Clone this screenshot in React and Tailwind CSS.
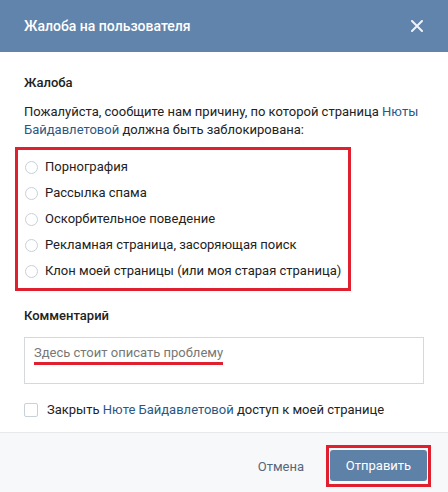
export default function App() {
  const options = [
    "Порнография",
    "Рассылка спама",
    "Оскорбительное поведение",
    "Рекламная страница, засоряющая поиск",
    "Клон моей страницы (или моя старая страница)",
  ];
  return (
    <div
      className="w-[448px] h-[492px] bg-white flex flex-col text-[13px] text-black overflow-hidden"
      style={{ fontFamily: "Roboto, 'Open Sans', sans-serif" }}
    >
      <div className="h-[52px] shrink-0 bg-[#6084ab] flex items-center justify-between pl-6 pr-[24px]">
        <span className="text-white text-[14px] font-medium">Жалоба на пользователя</span>
        <svg width="12" height="12" viewBox="0 0 12 12" className="mr-[1px]">
          <path d="M1 1 L11 11 M11 1 L1 11" stroke="#eef3f8" strokeWidth="2" strokeLinecap="round" />
        </svg>
      </div>

      <div className="flex flex-col px-6 pt-[22px] flex-1">
        <div className="leading-[18px] font-medium text-[#222]">Жалоба</div>
        <p className="mt-[11px] leading-[18px] text-[#222]">
          Пожалуйста, сообщите нам причину, по которой страница{" "}
          <span className="text-[#2a5885]">Нюты</span>
          <br />
          <span className="text-[#2a5885]">Байдавлетовой</span> должна быть заблокирована:
        </p>

        <div className="mt-[8px] -ml-[9px] w-[336px] border-[3px] border-[#e0202f] py-[4px] pl-[7px] flex flex-col">
          {options.map((o) => (
            <div key={o} className="h-[26px] flex items-center">
              <span className="w-[13px] h-[13px] rounded-full border border-[#c8d0d8] bg-white shrink-0" />
              <span className="ml-[7px] leading-[18px] text-[#222]">{o}</span>
            </div>
          ))}
        </div>

        <div className="mt-[16px] leading-[18px] font-medium text-[#222]">Комментарий</div>
        <div className="mt-[12px] h-[47px] w-[400px] border border-[#d3d9de] pl-[10px] pt-[5px]">
          <span className="inline-block leading-[18px] text-[#777] border-b-[3px] border-[#e0202f] -ml-[1px]">
            Здесь стоит описать проблему
          </span>
        </div>

        <div className="mt-[17px] flex items-center">
          <span className="w-[14px] h-[14px] border border-[#c8d0d8] rounded-[2px] bg-white shrink-0" />
          <span className="ml-[9px] leading-[18px] text-[#222]">
            Закрыть <span className="text-[#2a5885]">Нюте Байдавлетовой</span> доступ к моей странице
          </span>
        </div>
      </div>

      <div className="h-[60px] shrink-0 border-t border-[#e7e8ec] bg-[#f7f8fa] flex items-start justify-end pt-[12px] pr-[17px]">
        <span className="mt-[13px] leading-[18px] text-[#55677d] mr-[22px]">Отмена</span>
        <div className="border-[3px] border-[#e0202f] pt-[2px] pb-[3px] px-[1px]">
          <div className="w-[97px] h-[31px] bg-[#5e81a8] rounded-[3px] flex items-center justify-center text-white text-[13px]">
            Отправить
          </div>
        </div>
      </div>
    </div>
  );
}
